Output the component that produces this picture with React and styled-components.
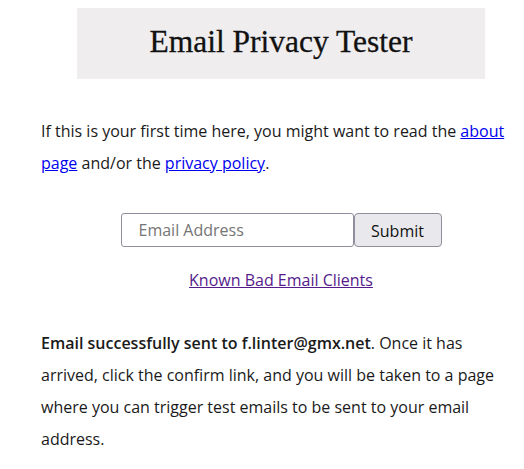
import React from 'react';
import styled, { createGlobalStyle } from 'styled-components';

const GlobalStyle = createGlobalStyle`
  body {
    margin: 0;
    background: #fff;
    font-family: "Open Sans", "Liberation Sans", sans-serif;
    color: #1a1a1a;
  }
`;

const Page = styled.main`
  width: 480px;
  padding: 8px 0 0 41px;
  font-size: 16px;
  line-height: 2;
`;

const Header = styled.header`
  width: 408px;
  height: 71px;
  margin: 0 auto;
  background: #efedee;
  display: flex;
  align-items: center;
  justify-content: center;
`;

const Title = styled.h1`
  margin: 0 0 4px;
  font-family: "Liberation Serif", "DejaVu Serif", serif;
  font-weight: normal;
  font-size: 31.5px;
  color: #111;
  -webkit-text-stroke: 0.3px #111;
`;

const Text = styled.p`
  margin: ${(props) => props.margin || '0'};
`;

const Link = styled.a`
  color: ${(props) => (props.visited ? '#551a8b' : '#0000ee')};
  text-decoration: underline;
`;

const Form = styled.form`
  display: flex;
  justify-content: center;
  margin-top: 34px;
`;

const Input = styled.input`
  width: 233px;
  height: 34px;
  box-sizing: border-box;
  padding: 0 17px;
  font: inherit;
  border: 1px solid #8f8f9d;
  border-radius: 3px;
  &::placeholder {
    color: #757575;
  }
`;

const Button = styled.button`
  width: 88px;
  height: 34px;
  box-sizing: border-box;
  font: inherit;
  background: #e9e9ed;
  border: 1px solid #8f8f9d;
  border-radius: 4px;
  color: #111;
`;

const Center = styled.div`
  text-align: center;
  margin-top: 17px;
`;

const Strong = styled.strong`
  font-weight: 600;
`;

export default function App() {
  return (
    <>
      <GlobalStyle />
      <Page>
        <Header>
          <Title>Email Privacy Tester</Title>
        </Header>
        <Text margin="36px 0 0">
          If this is your first time here, you might want to read the{' '}
          <Link href="#">about page</Link> and/or the{' '}
          <Link href="#">privacy policy</Link>.
        </Text>
        <Form onSubmit={(e) => e.preventDefault()}>
          <Input type="email" placeholder="Email Address" />
          <Button type="submit">Submit</Button>
        </Form>
        <Center>
          <Link href="#" visited>Known Bad Email Clients</Link>
        </Center>
        <Text margin="31px 0 0">
          <Strong>Email successfully sent to f.linter@gmx.net</Strong>. Once it has
          arrived, click the confirm link, and you will be taken to a page where
          you can trigger test emails to be sent to your email address.
        </Text>
      </Page>
    </>
  );
}
